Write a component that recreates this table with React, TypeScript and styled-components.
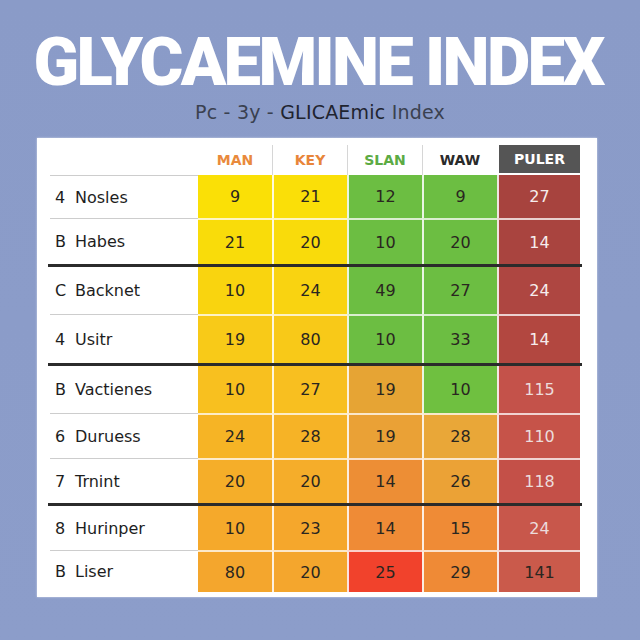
import React from "react";
import styled, { createGlobalStyle } from "styled-components";

type Tone = "dark" | "light" | "soft";

interface ICell {
  value: string;
  bg: string;
  tone?: Tone;
}
interface IRow {
  idx: string;
  name: string;
  height: number;
  divider: "thin" | "thick";
  cells: ICell[];
}

const GlobalStyle = createGlobalStyle`
  html, body {
    margin: 0;
    padding: 0;
    background: #8b9cc9;
  }
  body {
    width: 640px;
    height: 640px;
    overflow: hidden;
  }
`;

const Page = styled.div`
  width: 640px;
  height: 640px;
  padding-top: 29px;
  box-sizing: border-box;
  background: linear-gradient(180deg, #8a9bc8 0%, #8c9dca 100%);
  display: flex;
  flex-direction: column;
  align-items: center;
`;

const Title = styled.h1`
  margin: 0 0 0 -4px;
  font-family: Roboto, "Liberation Sans", sans-serif;
  font-weight: 900;
  font-size: 67px;
  line-height: 67px;
  letter-spacing: -2.7px;
  color: #ffffff;
  white-space: nowrap;
`;

const Subtitle = styled.p`
  margin: 5px 0 0;
  font-family: "DejaVu Sans", sans-serif;
  font-size: 19px;
  line-height: 22px;
  letter-spacing: 0.2px;
  color: #3a4150;

  & b {
    font-weight: normal;
    color: #1f2430;
  }
`;

const Panel = styled.section`
  align-self: flex-start;
  margin: 15px 0 0 37px;
  width: 560px;
  padding: 7px 17px 5px 13px;
  box-sizing: border-box;
  background: #ffffff;
  box-shadow: 0 0 2px rgba(255, 255, 255, 0.6);
`;

const columns = "148px 74px 75px 75px 75px 83px";

const HeadRow = styled.div`
  display: grid;
  grid-template-columns: ${columns};
  height: 30px;
`;

const HeadCell = styled.div<{ $color: string; $sep?: boolean; $boxed?: boolean }>`
  display: flex;
  align-items: center;
  justify-content: center;
  font-family: "DejaVu Sans", sans-serif;
  font-weight: bold;
  font-size: 14px;
  color: ${(p) => p.$color};
  border-left: ${(p) => (p.$sep ? "1px solid #d6d6d6" : "none")};
  background: ${(p) => (p.$boxed ? "#555555" : "transparent")};
  margin-left: ${(p) => (p.$boxed ? "2px" : "0")};
  height: ${(p) => (p.$boxed ? "28px" : "30px")};
`;

const Row = styled.div<{ $thick: boolean; $h: number }>`
  display: grid;
  grid-template-columns: ${columns};
  height: ${(p) => p.$h}px;
  box-sizing: border-box;
  border-top: ${(p) => (p.$thick ? "3px solid #2b2b2b" : "none")};
  margin: ${(p) => (p.$thick ? "0 -2px 0 -2px" : "0")};
  padding: ${(p) => (p.$thick ? "0 2px" : "0")};
`;

const Label = styled.div<{ $thin: boolean }>`
  display: flex;
  align-items: center;
  padding-left: 5px;
  font-family: "DejaVu Sans", sans-serif;
  font-size: 16px;
  color: #1e1e1e;
  border-top: ${(p) => (p.$thin ? "1px solid #cdcdcd" : "none")};
`;

const Idx = styled.span`
  width: 20px;
`;

const Value = styled.div<{ $bg: string; $tone: Tone; $thin: boolean; $first: boolean }>`
  display: flex;
  align-items: center;
  justify-content: center;
  font-family: "DejaVu Sans", sans-serif;
  font-size: 16px;
  background: ${(p) => p.$bg};
  color: ${(p) => (p.$tone === "light" ? "#f6eded" : p.$tone === "soft" ? "#ecdcdc" : "#2a2620")};
  border-left: ${(p) => (p.$first ? "none" : "2px solid rgba(255, 255, 255, 0.85)")};
  border-top: ${(p) => (p.$thin ? "2px solid rgba(255, 255, 255, 0.75)" : "none")};
`;

const green = "#6cbe42";

const rows: IRow[] = [
  {
    idx: "4",
    name: "Nosles",
    height: 43,
    divider: "thin",
    cells: [
      { value: "9", bg: "#fae006" },
      { value: "21", bg: "#fadf08" },
      { value: "12", bg: green },
      { value: "9", bg: green },
      { value: "27", bg: "#a7433e", tone: "light" },
    ],
  },
  {
    idx: "B",
    name: "Habes",
    height: 46,
    divider: "thin",
    cells: [
      { value: "21", bg: "#f9dc0a" },
      { value: "20", bg: "#f9db0b" },
      { value: "10", bg: green },
      { value: "20", bg: green },
      { value: "14", bg: "#a9443f", tone: "light" },
    ],
  },
  {
    idx: "C",
    name: "Backnet",
    height: 50,
    divider: "thick",
    cells: [
      { value: "10", bg: "#f9d40f" },
      { value: "24", bg: "#f9d311" },
      { value: "49", bg: green },
      { value: "27", bg: green },
      { value: "24", bg: "#ae4641", tone: "light" },
    ],
  },
  {
    idx: "4",
    name: "Usitr",
    height: 49,
    divider: "thin",
    cells: [
      { value: "19", bg: "#f8ca18" },
      { value: "80", bg: "#f8c918" },
      { value: "10", bg: green },
      { value: "33", bg: green },
      { value: "14", bg: "#b24740", tone: "light" },
    ],
  },
  {
    idx: "B",
    name: "Vactienes",
    height: 50,
    divider: "thick",
    cells: [
      { value: "10", bg: "#f8c01f" },
      { value: "27", bg: "#f8bf20" },
      { value: "19", bg: "#e6a434" },
      { value: "10", bg: "#6fc040" },
      { value: "115", bg: "#c4524a", tone: "soft" },
    ],
  },
  {
    idx: "6",
    name: "Duruess",
    height: 45,
    divider: "thin",
    cells: [
      { value: "24", bg: "#f6b425" },
      { value: "28", bg: "#f6b326" },
      { value: "19", bg: "#eaa136" },
      { value: "28", bg: "#e9a738" },
      { value: "110", bg: "#c65349", tone: "soft" },
    ],
  },
  {
    idx: "7",
    name: "Trnint",
    height: 45,
    divider: "thin",
    cells: [
      { value: "20", bg: "#f5ae29" },
      { value: "20", bg: "#f5ad2a" },
      { value: "14", bg: "#ed8e35" },
      { value: "26", bg: "#eba236" },
      { value: "118", bg: "#c45048", tone: "soft" },
    ],
  },
  {
    idx: "8",
    name: "Hurinper",
    height: 47,
    divider: "thick",
    cells: [
      { value: "10", bg: "#f5a92b" },
      { value: "23", bg: "#f5a72c" },
      { value: "14", bg: "#ef8b36" },
      { value: "15", bg: "#ef8b36" },
      { value: "24", bg: "#c8574b", tone: "soft" },
    ],
  },
  {
    idx: "B",
    name: "Liser",
    height: 42,
    divider: "thin",
    cells: [
      { value: "80", bg: "#f4a62d" },
      { value: "20", bg: "#f4a62d" },
      { value: "25", bg: "#f1422c" },
      { value: "29", bg: "#ef8a36" },
      { value: "141", bg: "#ca5a4b" },
    ],
  },
];

const App = () => {
  return (
    <>
      <GlobalStyle />
      <Page>
        <Title>GLYCAEMINE INDEX</Title>
        <Subtitle>
          Pc - 3y - <b>GLICAEmic</b> Index
        </Subtitle>

        <Panel>
          <HeadRow>
            <div />
            <HeadCell $color="#e98a3c">MAN</HeadCell>
            <HeadCell $color="#e8853a" $sep>
              KEY
            </HeadCell>
            <HeadCell $color="#5cab44" $sep>
              SLAN
            </HeadCell>
            <HeadCell $color="#2a2a2a" $sep>
              WAW
            </HeadCell>
            <HeadCell $color="#ffffff" $boxed>
              PULER
            </HeadCell>
          </HeadRow>

          {rows.map((row, i) => {
            const thin = row.divider === "thin";
            return (
              <Row key={i} $thick={!thin} $h={row.height}>
                <Label $thin={thin}>
                  <Idx>{row.idx}</Idx>
                  {row.name}
                </Label>
                {row.cells.map((cell, j) => (
                  <Value
                    key={j}
                    $bg={cell.bg}
                    $tone={cell.tone ?? "dark"}
                    $thin={thin && i > 0}
                    $first={j === 0}
                  >
                    {cell.value}
                  </Value>
                ))}
              </Row>
            );
          })}
        </Panel>
      </Page>
    </>
  );
};

export default App;
